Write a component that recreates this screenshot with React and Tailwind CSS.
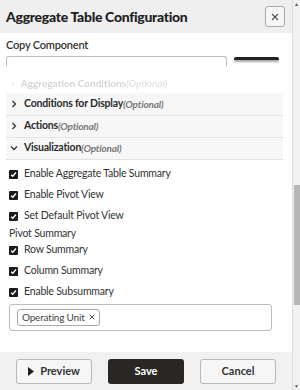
import React from "react";

const font = { fontFamily: "Lato, 'Noto Sans', sans-serif" };

function Check({ label }) {
    return (
        <div className="flex items-center h-[21px] pl-[9px]">
            <span className="w-[9px] h-[9px] bg-[#1c1a19] rounded-[1px] flex items-center justify-center">
                <svg width="7" height="7" viewBox="0 0 8 8">
                    <path d="M1.3 4.2 L3.2 6 L6.8 1.8" fill="none" stroke="white" strokeWidth="1.6" />
                </svg>
            </span>
            <span className="ml-[6px] text-[10.5px] tracking-[-0.2px] text-[#333]">{label}</span>
        </div>
    );
}

function Section({ title, open }) {
    return (
        <div className="flex items-center h-[22px] px-[4px] bg-[#f7f7f7] border-b border-[#e2e2e2]">
            <svg width="8" height="8" viewBox="0 0 8 8" className="mr-[6px]">
                {open ? (
                    <path d="M1 2.5 L4 5.5 L7 2.5" fill="none" stroke="#333" strokeWidth="1.3" />
                ) : (
                    <path d="M2.5 1 L5.5 4 L2.5 7" fill="none" stroke="#333" strokeWidth="1.3" />
                )}
            </svg>
            <span className="text-[10.5px] font-bold tracking-[-0.2px] text-[#2b2b2b]">{title}</span>
            <span className="text-[10px] italic font-bold tracking-[-0.2px] text-[#777]">(Optional)</span>
        </div>
    );
}

export default function App() {
    return (
        <div className="w-[300px] h-[390px] flex overflow-hidden bg-white" style={font}>
            <div className="w-[292px] h-full flex flex-col">
                {/* header */}
                <div className="h-[33px] shrink-0 bg-[#efefef] flex items-center justify-between pl-[6px] pr-[7px]">
                    <h1 className="text-[14px] font-black text-[#1f1f1f] tracking-[-0.3px]">Aggregate Table Configuration</h1>
                    <button className="w-[20px] h-[21px] border border-[#a8a8a8] rounded-[3px] bg-[#f7f7f7] flex items-center justify-center">
                        <svg width="8" height="8" viewBox="0 0 8 8">
                            <path d="M1 1 L7 7 M7 1 L1 7" stroke="#555" strokeWidth="1.2" />
                        </svg>
                    </button>
                </div>

                {/* body */}
                <div className="flex-1 flex flex-col overflow-hidden">
                    <div className="px-[6px] pt-[4px] text-[11px] font-semibold tracking-[-0.2px] text-[#333]">Copy Component</div>
                    <div className="flex items-start px-[6px] pt-[2px] gap-[7px]">
                        <div className="w-[221px] h-[10px] border-t border-x border-[#bdbdbd] rounded-t-[3px]" />
                        <div className="w-[45px] h-[3px] mt-[1px] bg-[#222] rounded-t-[2px] shadow-[0_2px_2px_rgba(0,0,0,0.35)]" />
                    </div>
                    <div className="mt-[6px] mx-[6px] w-[277px]">
                        <div className="flex items-center h-[22px] px-[6px] pt-[2px] border-b border-[#e6e6e6] opacity-25 blur-[0.6px]">
                            <span className="text-[10px] mr-[6px] text-[#555]">›</span>
                            <span className="text-[10px] font-bold text-[#555]">Aggregation Conditions</span>
                            <span className="text-[10px] italic text-[#777]">(Optional)</span>
                        </div>
                        <Section title="Conditions for Display" />
                        <Section title="Actions" />
                        <Section title="Visualization" open />
                    </div>
                    <div className="pt-[4px]">
                        <Check label="Enable Aggregate Table Summary" />
                        <Check label="Enable Pivot View" />
                        <Check label="Set Default Pivot View" />
                        <div className="pl-[9px] text-[10.5px] tracking-[-0.2px] text-[#333] leading-[13px]">Pivot Summary</div>
                        <Check label="Row Summary" />
                        <Check label="Column Summary" />
                        <Check label="Enable Subsummary" />
                        <div className="ml-[9px] mt-[1px] w-[263px] h-[27px] border border-[#bcbcbc] rounded-[3px] flex items-center pl-[7px]">
                            <span className="h-[17px] px-[4px] border border-[#a9a9a9] rounded-[3px] flex items-center gap-[4px] text-[10px] tracking-[-0.2px] text-[#444]">
                                Operating Unit
                                <svg width="6" height="6" viewBox="0 0 6 6">
                                    <path d="M0.7 0.7 L5.3 5.3 M5.3 0.7 L0.7 5.3" stroke="#555" strokeWidth="1" />
                                </svg>
                            </span>
                        </div>
                    </div>
                </div>

                {/* footer */}
                <div className="h-[38px] shrink-0 bg-[#f1f1f1] flex items-center pl-[16px] gap-[16px]">
                    <button className="w-[76px] h-[25px] border border-[#b9b9b9] rounded-[3px] bg-[#f6f6f6] flex items-center justify-center gap-[6px] text-[11px] font-bold text-[#333]">
                        <svg width="6" height="9" viewBox="0 0 6 9">
                            <path d="M0 0 L6 4.5 L0 9 Z" fill="#1f1f1f" />
                        </svg>
                        Preview
                    </button>
                    <button className="w-[76px] h-[25px] rounded-[3px] bg-[#2a2623] text-white text-[11px] font-bold">Save</button>
                    <button className="w-[76px] h-[25px] border border-[#b9b9b9] rounded-[3px] bg-[#f6f6f6] text-[11px] font-bold text-[#333]">Cancel</button>
                </div>
            </div>

            {/* scrollbar */}
            <div className="w-[8px] h-full bg-[#f1f1f1] border-l border-[#dcdcdc] flex flex-col items-center">
                <span className="text-[5px] leading-[8px] text-[#555]">▲</span>
                <div className="w-[6px] h-[120px] bg-[#b6b6b6] mt-[177px]" />
                <div className="flex-1" />
                <span className="text-[5px] leading-[8px] text-[#555]">▼</span>
            </div>
        </div>
    );
}
